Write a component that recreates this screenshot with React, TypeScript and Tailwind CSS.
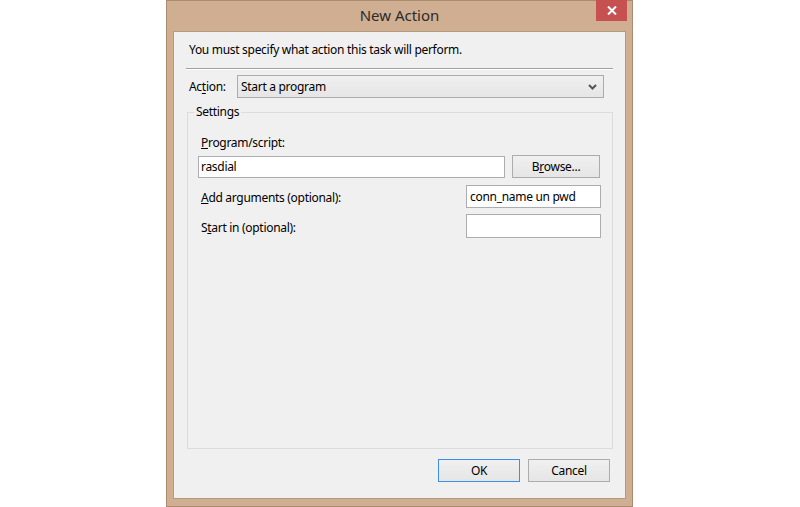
import React from "react";

const font = { fontFamily: '"Noto Sans", "Open Sans", sans-serif' };

function Btn({ children, primary }: { children: React.ReactNode; primary?: boolean }) {
  return (
    <div
      className={
        "h-[23px] w-[82px] flex items-center justify-center text-[12px] text-black bg-gradient-to-b from-[#f0f0f0] to-[#e5e5e5] border " +
        (primary ? "border-[#3c8fe6]" : "border-[#acacac]")
      }
    >
      {children}
    </div>
  );
}

function Field({ value, className }: { value?: string; className: string }) {
  return (
    <div
      className={
        "bg-white border border-[#abadb3] flex items-center pl-[2px] text-[12px] text-black " + className
      }
    >
      {value}
    </div>
  );
}

export default function App() {
  return (
    <div className="w-[800px] h-[507px] bg-white flex pl-[166px] tracking-[-0.3px]" style={font}>
      {/* window frame */}
      <div className="w-[467px] h-[507px] border border-[#a98b70] bg-[#cfae92] flex flex-col">
        {/* title bar */}
        <div className="relative h-[30px] flex items-center justify-center text-[15px] text-[#2b2b2b] tracking-normal">
          <span className="-mt-[1px]">New Action</span>
          <div className="absolute right-[5px] -top-[1px] w-[31px] h-[21px] bg-[#c75050] flex items-center justify-center">
            <svg width="10" height="9" viewBox="0 0 10 9">
              <path d="M1 0.5 L9 8.5 M9 0.5 L1 8.5" stroke="#fff" strokeWidth="2" />
            </svg>
          </div>
        </div>

        {/* client area */}
        <div className="mx-[6px] h-[468px] border border-[#b49a80] bg-[#f0f0f0] flex flex-col">
          <div className="pl-[15px] pt-[10px] leading-[16px] text-[12px] text-black">
            You must specify what action this task will perform.
          </div>
          <div className="ml-[12px] mr-[12px] mt-[10px] border-t border-[#a0a0a0] border-b border-b-white" />

          {/* action row */}
          <div className="flex items-center mt-[5px] pl-[15px] text-[12px] text-black">
            <span className="w-[48px]">
              Ac<u className="underline-offset-2">t</u>ion:
            </span>
            <div className="w-[367px] h-[23px] border border-[#acacac] bg-gradient-to-b from-[#f0f0f0] to-[#e5e5e5] flex items-center justify-between pl-[3px] pr-[6px]">
              <span>Start a program</span>
              <svg width="9" height="6" viewBox="0 0 9 6">
                <path d="M1 1 L4.5 4.5 L8 1" stroke="#555" strokeWidth="2" fill="none" />
              </svg>
            </div>
          </div>

          {/* settings group */}
          <fieldset className="ml-[13px] mr-[12px] mt-[6px] h-[345px] border border-[#dcdcdc] text-[12px] text-black">
            <legend className="ml-[6px] px-[2px] leading-[16px]">Settings</legend>
            <div className="pl-[13px] pt-[15px] leading-[16px]">
              <u>P</u>rogram/script:
            </div>
            <div className="flex items-center mt-[4px] pl-[10px]">
              <Field value="rasdial" className="w-[307px] h-[22px]" />
              <div className="ml-[7px]">
                <div className="h-[23px] w-[88px] flex items-center justify-center bg-gradient-to-b from-[#f0f0f0] to-[#e5e5e5] border border-[#acacac]">
                  B<u>r</u>owse...
                </div>
              </div>
            </div>
            <div className="flex items-center justify-between mt-[7px] pl-[13px] pr-[11px]">
              <span className="pt-[3px]">
                <u>A</u>dd arguments (optional):
              </span>
              <Field value="conn_name un pwd" className="w-[135px] h-[23px] pl-[3px]" />
            </div>
            <div className="flex items-center justify-between mt-[6px] pl-[13px] pr-[11px]">
              <span className="pt-[3px]">
                S<u>t</u>art in (optional):
              </span>
              <Field className="w-[135px] h-[24px]" />
            </div>
          </fieldset>

          {/* buttons */}
          <div className="flex justify-end gap-[8px] mt-[10px] pr-[15px]">
            <Btn primary>OK</Btn>
            <Btn>Cancel</Btn>
          </div>
        </div>
      </div>
    </div>
  );
}
